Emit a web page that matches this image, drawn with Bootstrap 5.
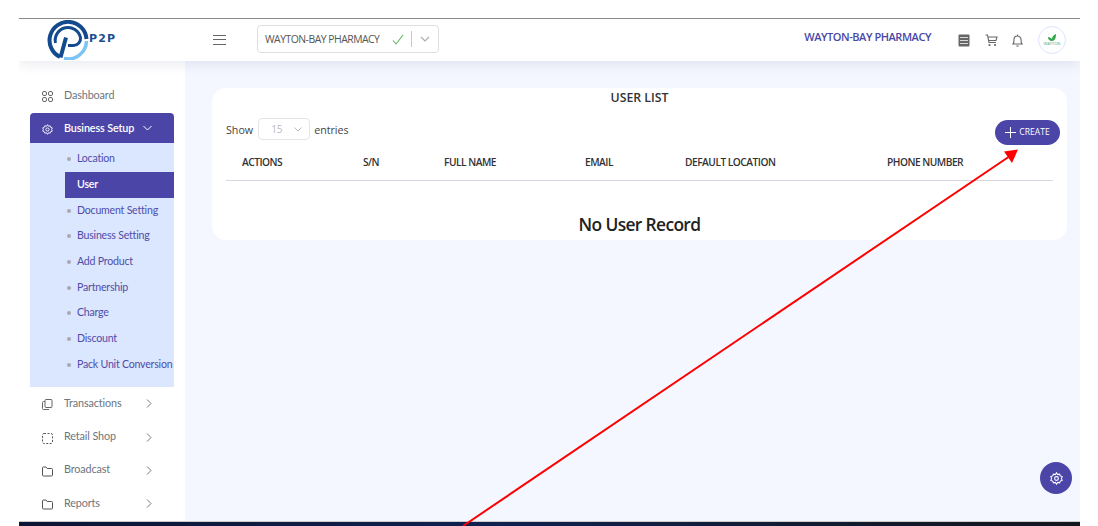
<!DOCTYPE html>
<html lang="en">
<head>
<meta charset="utf-8">
<title>User List</title>
<link href="https://cdn.jsdelivr.net/npm/bootstrap@5.3.0/dist/css/bootstrap.min.css" rel="stylesheet">
<style>
html,body{height:526px;overflow:hidden;background:#fff}
body{font-family:"Open Sans","Noto Sans",sans-serif;color:#343a40}
.frame{width:1061px;height:508px;margin:18px 0 0 19px;position:relative;overflow:hidden}
.topbar{height:43px;border-top:1px solid #8a8a8a;background:#fff;box-shadow:0 2px 14px rgba(60,70,120,.13);position:relative;z-index:2;flex:none}
.logo-zone{width:194px;padding-left:28px}
.logo-word{font:700 11px "DejaVu Sans",sans-serif;color:#1d4f8f;letter-spacing:1.2px;margin:0 0 4px 0}
.burger{width:13px;height:10px;border-top:1.5px solid #666;border-bottom:1.5px solid #666;position:relative;margin-right:31px}
.burger::after{content:"";position:absolute;left:0;right:0;top:3px;border-top:1.5px solid #666}
.picker{width:182px;height:28px;border:1px solid #dcdfe4;border-radius:4px;padding-left:7px;font-size:10.4px;letter-spacing:-.5px;color:#555;margin-top:-2px}
.picker-txt{padding-top:2px}
.picker-sep{width:1px;height:16px;background:#c8c8c8;margin:0 8px 0 7px}
.org{font:600 11px "Open Sans",sans-serif;letter-spacing:-.45px;color:#4a47a8;margin-right:26.5px;margin-top:-7px}
.tools{gap:14px;padding-right:14px}
.paper-ico{margin-right:1.5px}
.avatar{width:28px;height:28px;border-radius:50%;border:1px solid #dbe6ff;margin-left:1px;line-height:1}
.avatar-name{font-size:4px;color:#3fa98a;letter-spacing:0}
.side{width:166px;background:#fff;padding:18px 11px 0;flex:none;font-family:Lato,"Noto Sans",sans-serif;font-size:10.8px;letter-spacing:-.12px;color:#6c757d;box-shadow:0 0 8px rgba(60,70,120,.04)}
.side-row{height:33.3px;gap:11px;padding-left:12px}
.side-row svg.lead-ico{width:11px;height:11px;flex:none;margin-top:2px}
.side-row .lbl{width:71px;margin-top:-2px}
.side-open{background:#4b45a8;color:#fff;height:30px;border-radius:4px 4px 0 0;margin-top:1px}
.side-open .lbl{width:auto;font-weight:600;margin-right:-2px;margin-top:-1px}
.sub{background:#dbe6ff;padding:3px 0 9.5px 35px;height:244px;color:#4f4da8;margin-bottom:0;font-size:10.6px;letter-spacing:-.22px}
.sub-row{height:25.7px;gap:6px;padding-left:2px;white-space:nowrap}
.sub-row::before{content:"";width:4px;height:4px;border-radius:50%;background:#a9a9b4;flex:none}
.sub-row.on{background:#4b45a8;color:#fff;font-weight:600;padding-left:12px}
.sub-row.on::before{display:none}
.stage{background:#f4f7ff;padding:27px 13px 0 27px;min-width:0}
.panel{background:#fff;border-radius:14px;height:152px;padding:0 14px;position:relative}
.panel-title{font-size:12.3px;font-weight:600;color:#333;text-align:center;line-height:20px}
.len{font-size:10.7px;color:#444;gap:4px;height:22px;margin-top:10px}
.len-txt{padding-top:2px}
.len-box{width:52px;height:22px;border:1px solid #e3e5ea;border-radius:4px;font-size:10px;color:#bbb;padding:0 7px 0 12px;margin-left:1px}
.add-btn{width:65px;height:25px;border-radius:13px;background:#4b45a8;border:0;color:#fff;font-size:8.6px;gap:3px;padding:0;position:absolute;right:7px;top:32px}
.grid-head{font-size:10.2px;letter-spacing:-.5px;margin:0;width:827px;table-layout:fixed}
.grid-head th{font-weight:600;padding:13px 0 9px 16px;color:#333;border-bottom:1px solid #d5d8de;line-height:18px;background:transparent}
.none{font-size:17.4px;letter-spacing:-.65px;text-align:center;color:#222;margin-top:31px;line-height:24px;font-weight:600}
.fab{width:32px;height:32px;border-radius:50%;background:#4b45a8;position:absolute;right:8px;top:401px;z-index:3}
.taskbar{height:5px;background:linear-gradient(90deg,#0d1533,#0f2150 45%,#121a2c 80%,#14161f);border-top:1px solid #ccc;flex:none}
.arrow{position:absolute;left:-19px;top:-18px;width:1098px;height:526px;z-index:5;pointer-events:none}
</style>
</head>
<body>
<div class="frame d-flex flex-column">
  <header class="topbar d-flex align-items-center">
    <div class="logo-zone d-flex align-items-center">
      <svg width="42" height="40" viewBox="0 0 42 40"><path d="M17 38.500A18.500 18.500 0 0 0 39.500 21" fill="none" stroke="#7cc4f4" stroke-width="3.500"/><path d="M13 37A18.500 18.500 0 1 1 39.500 19" fill="none" stroke="#134a8e" stroke-width="4"/><path d="M8.500 23A12.500 12.500 0 0 1 33.500 17.500A7 7 0 0 1 26.500 25.500H21" fill="none" stroke="#134a8e" stroke-width="3"/><path d="M13.500 37.500 19 17.500" fill="none" stroke="#134a8e" stroke-width="4"/></svg>
      <span class="logo-word">P2P</span>
    </div>
    <div class="burger"></div>
    <div class="picker d-flex align-items-center">
      <span class="picker-txt flex-grow-1 text-nowrap">WAYTON-BAY PHARMACY</span>
      <svg width="12" height="11" viewBox="0 0 12 11"><path d="M1 6.500 4 10 11 1" fill="none" stroke="#58b85c" stroke-width="1.100"/></svg>
      <span class="picker-sep"></span>
      <svg class="me-2" width="10" height="6" viewBox="0 0 10 6"><path d="M1 1 5 5 9 1" fill="none" stroke="#aaa" stroke-width="1.100"/></svg>
    </div>
    <div class="org ms-auto">WAYTON-BAY PHARMACY</div>
    <div class="tools d-flex align-items-center">
      <svg class="paper-ico" width="12" height="13" viewBox="0 0 12 13"><rect x=".5" y=".5" width="11" height="12" rx="1" fill="#666"/><path d="M2 3.500H10M2 6.500H10M2 9.500H10" stroke="#d8d8d8"/></svg>
      <svg width="13" height="13" viewBox="0 0 13 13"><path d="M.5 1H2.500L4 8.500H11M3 3H12L11 6.500H3.500" fill="none" stroke="#666" stroke-width="1.100"/><circle cx="4.500" cy="11" r="1.100" fill="#666"/><circle cx="10" cy="11" r="1.100" fill="#666"/></svg>
      <svg width="11" height="13" viewBox="0 0 11 13"><path d="M1 10C2 9 2 7 2 5.500A3.500 3.500 0 0 1 9 5.500C9 7 9 9 10 10ZM4.300 12H6.700M5.500 .5V2" fill="none" stroke="#666" stroke-width="1.100"/></svg>
      <div class="avatar d-flex flex-column align-items-center justify-content-center">
        <svg width="10" height="8" viewBox="0 0 10 8"><path d="M5 7C2 7 1 5 1 3 3 3 4 4 5 5 5 3 6 1 9 0 9 4 8 7 5 7Z" fill="#35a84a"/></svg>
        <span class="avatar-name">WAYTON</span>
      </div>
    </div>
  </header>

  <div class="d-flex flex-grow-1 position-relative" style="min-height:0">
    <nav class="side">
      <div class="side-row d-flex align-items-center">
        <svg class="lead-ico" viewBox="0 0 11 11" fill="none" stroke="#666"><rect x=".5" y=".5" width="4" height="4" rx="1.500"/><rect x="6.500" y=".5" width="4" height="4" rx="1.500"/><rect x=".5" y="6.500" width="4" height="4" rx="1.500"/><rect x="6.500" y="6.500" width="4" height="4" rx="1.500"/></svg>
        <span class="lbl">Dashboard</span>
      </div>
      <div class="side-row side-open d-flex align-items-center">
        <svg class="lead-ico" viewBox="0 0 24 24" fill="none" stroke="#fff" stroke-width="2"><circle cx="12" cy="12" r="3.500"/><path d="M12 1.500 14 4.800 17.800 4 18.900 7.200 22.500 8.500 21 12 22.500 15.500 18.900 16.800 17.800 20 14 19.200 12 22.500 10 19.200 6.200 20 5.100 16.800 1.500 15.500 3 12 1.500 8.500 5.100 7.200 6.200 4 10 4.800Z"/></svg>
        <span class="lbl">Business Setup</span>
        <svg width="9" height="6" viewBox="0 0 9 6"><path d="M.5 1 4.500 5 8.500 1" fill="none" stroke="#fff"/></svg>
      </div>
      <div class="sub">
        <div class="sub-row d-flex align-items-center">Location</div>
        <div class="sub-row on d-flex align-items-center">User</div>
        <div class="sub-row d-flex align-items-center">Document Setting</div>
        <div class="sub-row d-flex align-items-center">Business Setting</div>
        <div class="sub-row d-flex align-items-center">Add Product</div>
        <div class="sub-row d-flex align-items-center">Partnership</div>
        <div class="sub-row d-flex align-items-center">Charge</div>
        <div class="sub-row d-flex align-items-center">Discount</div>
        <div class="sub-row d-flex align-items-center">Pack Unit Conversion</div>
      </div>
      <div class="side-row d-flex align-items-center">
        <svg class="lead-ico" viewBox="0 0 11 11" fill="none" stroke="#666"><rect x="3" y=".5" width="7" height="8" rx="1"/><path d="M3 2.500H1.500A1 1 0 0 0 .5 3.500V9.500A1 1 0 0 0 1.500 10.500H7"/></svg>
        <span class="lbl">Transactions</span>
        <svg width="6" height="9" viewBox="0 0 6 9"><path d="M1 .5 5 4.500 1 8.500" fill="none" stroke="#777"/></svg>
      </div>
      <div class="side-row d-flex align-items-center">
        <svg class="lead-ico" viewBox="0 0 11 11" fill="none" stroke="#555"><rect x=".5" y=".5" width="10" height="10" rx="1.500" stroke-dasharray="2 1.500"/></svg>
        <span class="lbl">Retail Shop</span>
        <svg width="6" height="9" viewBox="0 0 6 9"><path d="M1 .5 5 4.500 1 8.500" fill="none" stroke="#777"/></svg>
      </div>
      <div class="side-row d-flex align-items-center">
        <svg class="lead-ico" viewBox="0 0 11 11" fill="none" stroke="#555"><path d="M.5 2A1 1 0 0 1 1.500 1H4L5.200 2.500H9.500A1 1 0 0 1 10.500 3.500V9A1 1 0 0 1 9.500 10H1.500A1 1 0 0 1 .5 9Z"/></svg>
        <span class="lbl">Broadcast</span>
        <svg width="6" height="9" viewBox="0 0 6 9"><path d="M1 .5 5 4.500 1 8.500" fill="none" stroke="#777"/></svg>
      </div>
      <div class="side-row d-flex align-items-center">
        <svg class="lead-ico" viewBox="0 0 11 11" fill="none" stroke="#555"><path d="M.5 2A1 1 0 0 1 1.500 1H4L5.200 2.500H9.500A1 1 0 0 1 10.500 3.500V9A1 1 0 0 1 9.500 10H1.500A1 1 0 0 1 .5 9Z"/></svg>
        <span class="lbl">Reports</span>
        <svg width="6" height="9" viewBox="0 0 6 9"><path d="M1 .5 5 4.500 1 8.500" fill="none" stroke="#777"/></svg>
      </div>
    </nav>

    <main class="stage flex-grow-1">
      <section class="panel">
        <div class="panel-title">USER LIST</div>
        <div class="len d-flex align-items-center">
          <span class="len-txt">Show</span>
          <span class="len-box d-flex align-items-center justify-content-between">15
            <svg width="8" height="5" viewBox="0 0 8 5"><path d="M.5 .5 4 4 7.500 .5" fill="none" stroke="#bbb"/></svg>
          </span>
          <span class="len-txt">entries</span>
        </div>
        <button class="add-btn btn d-flex align-items-center justify-content-center" type="button">
          <svg width="11" height="11" viewBox="0 0 11 11"><path d="M5.500 0V11M0 5.500H11" stroke="#fff"/></svg>CREATE
        </button>
        <table class="table grid-head">
          <colgroup><col style="width:121px"><col style="width:81px"><col style="width:141px"><col style="width:100px"><col style="width:202px"><col></colgroup>
          <thead><tr><th>ACTIONS</th><th>S/N</th><th>FULL NAME</th><th>EMAIL</th><th>DEFAULT LOCATION</th><th>PHONE NUMBER</th></tr></thead>
        </table>
        <div class="none">No User Record</div>
      </section>
    </main>
    <div class="fab d-flex align-items-center justify-content-center">
      <svg width="13" height="13" viewBox="0 0 24 24" fill="none" stroke="#fff" stroke-width="2"><circle cx="12" cy="12" r="3.500"/><path d="M12 1.500 14 4.800 17.800 4 18.900 7.200 22.500 8.500 21 12 22.500 15.500 18.900 16.800 17.800 20 14 19.200 12 22.500 10 19.200 6.200 20 5.100 16.800 1.500 15.500 3 12 1.500 8.500 5.100 7.200 6.200 4 10 4.800Z"/></svg>
    </div>
  </div>
  <div class="taskbar"></div>
  <svg class="arrow" viewBox="0 0 1098 526"><path d="M463 526 1010 156" stroke="#f00" stroke-width="2" fill="none"/><path d="M1018 149.500 1004 151.500 1012 163Z" fill="#f00"/></svg>
</div>
</body>
</html>
